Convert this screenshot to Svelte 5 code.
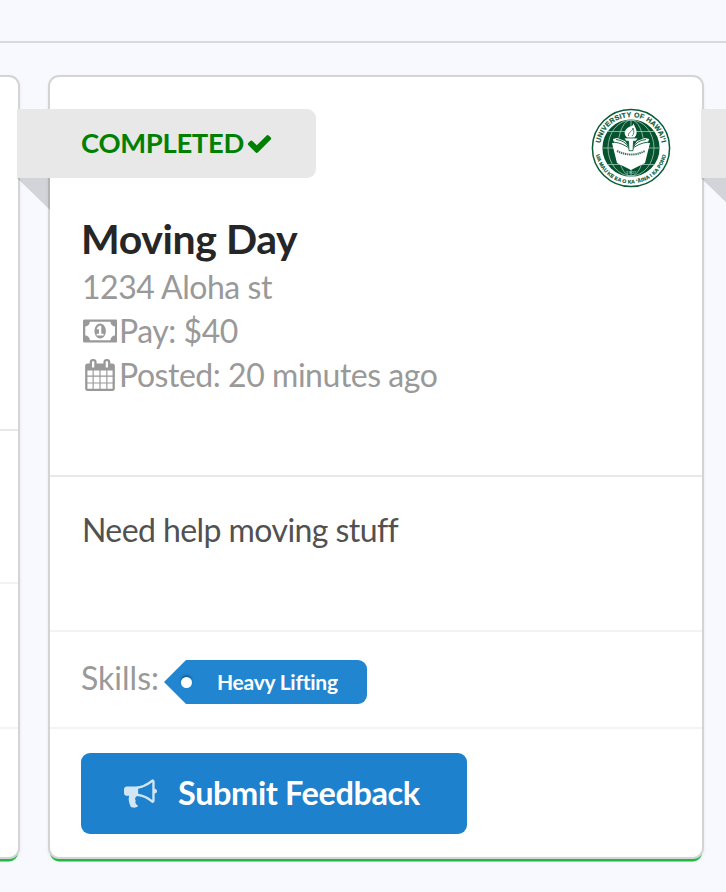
<script>
  const check = 'M1671 566q0 40-28 68l-724 724-136 136q-28 28-68 28t-68-28l-136-136-362-362q-28-28-28-68t28-68l136-136q28-28 68-28t68 28l294 295 656-657q28-28 68-28t68 28l136 136q28 28 28 68z';
  const bullhorn = 'M1664 640q53 0 90.5 37.5t37.5 90.5-37.5 90.5-90.5 37.5v384q0 52-38 90t-90 38q-417-347-812-380-58 19-91 66t-31 100.5 40 92.5q-20 33-23 65.5t6 58 33.5 55 48 50 61.5 50.5q-29 58-111.5 83t-168.5 11.5-132-55.5q-7-23-29.5-87.5t-32-94.5-23-89-15-101 3.5-98.5 22-110.5h-122q-66 0-113-47t-47-113v-192q0-66 47-113t113-47h480q435 0 896-384 52 0 90 38t38 90v384zm-128 604v-954q-394 302-768 343v270q377 42 768 341z';
  const money = 'M768 1152h384v-96h-128v-448h-114l-148 137 77 80q42-37 55-57h2v288h-128v96zm512-256q0 70-21 142t-59.5 134-101.5 101-138 39-138-39-101.5-101-59.5-134-21-142 21-142 59.5-134 101.5-101 138-39 138 39 101.5 101 59.5 134 21 142zm512 256v-512q-106 0-181-75t-75-181h-1152q0 106-75 181t-181 75v512q106 0 181 75t75 181h1152q0-106 75-181t181-75zm128-832v1152q0 26-19 45t-45 19h-1792q-26 0-45-19t-19-45v-1152q0-26 19-45t45-19h1792q26 0 45 19t19 45z';
  const calendar = 'M192 1664h288v-288h-288v288zm352 0h320v-288h-320v288zm-352-352h288v-320h-288v320zm352 0h320v-320h-320v320zm-352-384h288v-288h-288v288zm736 736h320v-288h-320v288zm-384-736h320v-288h-320v288zm768 736h288v-288h-288v288zm-384-352h320v-320h-320v320zm-352-864v-288q0-13-9.5-22.5t-22.5-9.5h-64q-13 0-22.5 9.5t-9.5 22.5v288q0 13 9.5 22.5t22.5 9.5h64q13 0 22.5-9.5t9.5-22.5zm736 864h288v-320h-288v320zm-384-384h320v-288h-320v288zm384 0h288v-288h-288v288zm32-480v-288q0-13-9.5-22.5t-22.5-9.5h-64q-13 0-22.5 9.5t-9.5 22.5v288q0 13 9.5 22.5t22.5 9.5h64q13 0 22.5-9.5t9.5-22.5zm384-64v1280q0 52-38 90t-90 38h-1408q-52 0-90-38t-38-90v-1280q0-52 38-90t90-38h128v-96q0-66 47-113t113-47h64q66 0 113 47t47 113v96h384v-96q0-66 47-113t113-47h64q66 0 113 47t47 113v96h128q52 0 90 38t38 90z';
</script>

<main>
  <header></header>
  <div class="cards">
    <article class="card previous">
      <div class="prev-a"></div>
      <div class="prev-b"></div>
      <div class="prev-c"></div>
    </article>

    <article class="card">
      <section class="summary">
        <div class="top">
          <div class="ribbon">
            <span>COMPLETED</span>
            <svg width="27" height="27" viewBox="0 0 1792 1792"><path d={check} /></svg>
          </div>
          <svg class="seal" viewBox="0 0 80 80">
            <defs>
              <path id="arc-top" d="M9 40a31 31 0 0 1 62 0" />
              <path id="arc-bottom" d="M4.500 36v4a35.500 35.500 0 0 0 71 0v-4" />
            </defs>
            <circle cx="40" cy="40" r="38.6" fill="#fff" stroke="#0b5a38" stroke-width="1.5" />
            <circle cx="40" cy="40" r="28.6" fill="#04532f" />
            <g fill="none" stroke="#a9c8b9" stroke-width=".8">
              <ellipse cx="40" cy="40" rx="13" ry="28" />
              <ellipse cx="40" cy="40" rx="23" ry="28" />
              <path d="M17 23.500h46M11.500 40h57M17 56.500h46M40 12v56" />
            </g>
            <path d="M22 31l4-1 8 3 6 9 6-9 8-3 4 1-1 4 2 0-5 20-14 7-14-7-5-20 2 0z" fill="#fff" />
            <path d="M22 34q11 1 18 8 7-7 18-8M25 31.500q9 1 13 8M55 31.500q-9 1-13 8" fill="none" stroke="#04532f" stroke-width=".9" />
            <path d="M33 30h14l-2 3.200h-2.500l-.5 9.500h-4l-.5-9.500h-2.500z" fill="#fff" stroke="#04532f" stroke-width=".8" />
            <path d="M36 29.500c-5-5-1-9 3-11 2 0 3-1 3.500-3 1 3 6 9 1 14z" fill="#fff" />
            <path d="M37.500 28c-1-4 4-4 4.500-8 1.500 4 1 6-1 8" fill="none" stroke="#04532f" stroke-width=".7" />
            <path d="M26 43q7 3.500 14 3.500t14-3.500" fill="none" stroke="#3c765b" stroke-width="2" stroke-dasharray="1.400 .7" />
            <text x="40" y="65.500" text-anchor="middle" font-size="4.500" fill="#c5dbcf">1907</text>
            <text class="rim" font-size="6.900" letter-spacing=".3"><textPath href="#arc-top" startOffset="50%" text-anchor="middle">UNIVERSITY OF HAWAI‘I</textPath></text>
            <text class="rim" font-size="5" letter-spacing=".16"><textPath href="#arc-bottom" startOffset="50%" text-anchor="middle">UA MAU KE EA O KA ‘ĀINA I KA PONO</textPath></text>
          </svg>
        </div>
        <h1>Moving Day</h1>
        <div class="meta">1234 Aloha st</div>
        <div class="meta"><span class="icon money"><svg width="34.300" height="32" viewBox="0 0 1920 1792"><path d={money} /></svg></span>Pay: $40</div>
        <div class="meta"><span class="icon"><svg width="32" height="32" viewBox="0 0 1792 1792"><path d={calendar} /></svg></span>Posted: 20 minutes ago</div>
      </section>
      <section class="description">Need help moving stuff</section>
      <section class="skills">
        <span>Skills:</span>
        <span class="tag"><i></i>Heavy Lifting</span>
      </section>
      <section class="action">
        <button><svg width="33" height="33" viewBox="0 0 1792 1792"><path d={bullhorn} /></svg><span>Submit Feedback</span></button>
      </section>
    </article>

    <div class="next-ribbon"></div>
  </div>
</main>

<style>
  main {
    width: 726px;
    height: 892px;
    overflow: hidden;
    background: #f8f9ff;
    font-family: Lato, sans-serif;
    box-sizing: border-box;
  }
  * { box-sizing: border-box; }
  header { height: 43px; border-bottom: 2px solid #d8d9de; }
  .cards { display: flex; gap: 32px; margin: 34px 0 0 -632px; align-items: flex-start; }
  .card {
    flex: 0 0 650px;
    height: 780px;
    background: #fff;
    border-radius: 9px;
    box-shadow: 0 0 0 2px #d4d4d5, 0 4.500px 0 0 #21ba45, 0 2px 5px 0 #d4d4d5;
  }
  .card:not(.previous) { flex-basis: 652px; }
  .prev-a { height: 354px; border-bottom: 2px solid #e8e8e8; }
  .prev-b { height: 153px; border-bottom: 2px solid #f3f3f3; }
  .prev-c { height: 145px; border-bottom: 2px solid #f3f3f3; }
  .summary { height: 400px; padding: 32px 32px 0; border-bottom: 2px solid #e8e8e8; }
  .top { display: flex; justify-content: space-between; height: 104px; }
  .ribbon {
    position: relative;
    display: flex;
    align-items: center;
    width: 299px;
    height: 69px;
    margin-left: -65px;
    padding: 0 0 1px 64px;
    background: #e8e8e8;
    color: green;
    border-radius: 0 9px 9px 0;
    font-size: 27.400px;
    font-weight: 700;
    letter-spacing: -.3px;
  }
  .ribbon span { padding-bottom: 1px; }
  .ribbon::after, .next-ribbon::after {
    content: '';
    position: absolute;
    left: 0;
    top: 100%;
    border-style: solid;
    border-width: 0 33px 32px 0;
    border-color: transparent rgba(0, 0, 0, .15) transparent transparent;
  }
  .ribbon svg { margin-left: 2px; }
  svg { fill: currentColor; display: block; }
  .seal { width: 80px; height: 80px; margin: -1px -1px 0 0; }
  .rim { font-family: "Liberation Sans", Arial, sans-serif; font-weight: 700; fill: #0b5a38; stroke: #0b5a38; stroke-width: .2px; }
  h1 { margin: 0 0 0 -1px; height: 51px; font-size: 41px; line-height: 51px; font-weight: 700; color: #262626; letter-spacing: -.4px; }
  .meta { display: flex; align-items: center; height: 44px; font-size: 32px; color: #999; white-space: pre; letter-spacing: -.46px; }
  .icon { width: 37px; display: flex; justify-content: center; padding: 1px 2px 0 0; }
  .icon.money { padding-right: 1px; }
  .description { height: 155px; padding: 32px 32px; border-bottom: 2px solid #f3f3f3; font-size: 32px; line-height: 42px; color: #515151; letter-spacing: -.57px; }
  .skills { display: flex; height: 97px; padding: 28px 32px; border-bottom: 2px solid #f3f3f3; font-size: 32px; line-height: 38px; color: #999; }
  .skills > span:first-child { margin: -1px 1px 0 -1px; }
  .tag {
    position: relative;
    height: 44px;
    width: 181px;
    margin-left: 26px;
    padding-left: 31px;
    border-radius: 0 9px 9px 0;
    background: #2185d0;
    color: #fff;
    font-size: 21px;
    font-weight: 700;
    letter-spacing: -.25px;
    line-height: 44px;
    white-space: nowrap;
  }
  .tag::before {
    content: '';
    position: absolute;
    left: -22px;
    top: 0;
    border-style: solid;
    border-width: 22px 22px 22px 0;
    border-color: transparent #2185d0 transparent transparent;
  }
  .tag i { position: absolute; left: -5px; top: 17px; width: 11px; height: 11px; border-radius: 50%; background: #fff; box-shadow: 0 -2px 2px #145f99; }
  .action { padding: 24px 31px; }
  button {
    display: flex;
    align-items: center;
    width: 386px;
    height: 81px;
    padding: 0 0 0 43px;
    border: 0;
    border-radius: 9px;
    background: #1e81cd;
    color: #fff;
    font: 700 32.500px Lato, sans-serif;
    letter-spacing: -.4px;
  }
  button svg { opacity: .8; margin-right: 21px; }
  button span { padding-bottom: 2px; }
  .next-ribbon { position: relative; flex: 0 0 299px; height: 69px; margin: 32px 0 0 -33px; background: #e8e8e8; }
</style>
